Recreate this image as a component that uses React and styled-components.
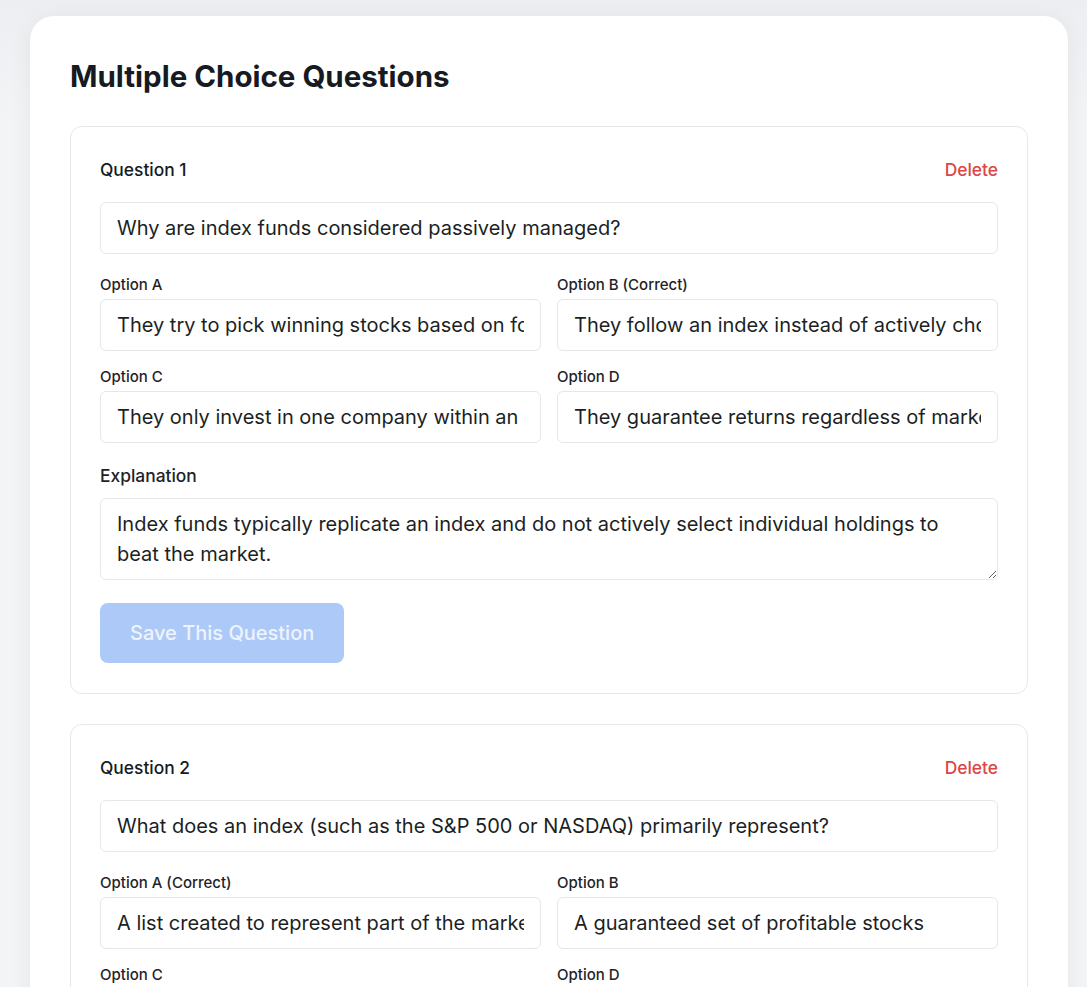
import React from 'react';
import styled, { createGlobalStyle } from 'styled-components';

const GlobalStyle = createGlobalStyle`
  html {
    scrollbar-width: none;
  }
  html::-webkit-scrollbar,
  body::-webkit-scrollbar {
    display: none;
  }
  body {
    margin: 0;
    background: #f3f4f6;
    font-family: Inter, "Noto Sans", "Liberation Sans", sans-serif;
    color: #111827;
  }
  * {
    box-sizing: border-box;
  }
`;

const questions = [
  {
    id: 1,
    text: 'Why are index funds considered passively managed?',
    options: [
      'They try to pick winning stocks based on forecasts',
      'They follow an index instead of actively choosing stocks',
      'They only invest in one company within an index',
      'They guarantee returns regardless of market conditions',
    ],
    correct: 1,
    explanation:
      'Index funds typically replicate an index and do not actively select individual holdings to beat the market.',
  },
  {
    id: 2,
    text: 'What does an index (such as the S&P 500 or NASDAQ) primarily represent?',
    options: [
      'A list created to represent part of the market',
      'A guaranteed set of profitable stocks',
      'A single company chosen by fund managers',
      'A government bond with a fixed return',
    ],
    correct: 0,
    explanation:
      'An index tracks a selected group of securities so that it reflects the performance of a segment of the market.',
  },
];

const letters = ['A', 'B', 'C', 'D'];

function QuestionCard({ q, index }) {
  return (
    <Card>
      <CardHeader>
        <QuestionTitle>{`Question ${index + 1}`}</QuestionTitle>
        <DeleteButton type="button">Delete</DeleteButton>
      </CardHeader>
      <TextInput defaultValue={q.text} readOnly />
      <OptionGrid>
        {q.options.map((opt, i) => (
          <Field key={i}>
            <OptionLabel>
              {`Option ${letters[i]}`}
              {q.correct === i ? ' (Correct)' : ''}
            </OptionLabel>
            <TextInput defaultValue={opt} readOnly />
          </Field>
        ))}
      </OptionGrid>
      <ExplanationLabel>Explanation</ExplanationLabel>
      <TextArea rows={2} defaultValue={q.explanation} readOnly />
      <SaveButton type="button" disabled>
        Save This Question
      </SaveButton>
    </Card>
  );
}

export default function App() {
  return (
    <>
      <GlobalStyle />
      <Page>
        <Panel>
          <Title>Multiple Choice Questions</Title>
          <CardList>
            {questions.map((q, i) => (
              <QuestionCard key={q.id} q={q} index={i} />
            ))}
          </CardList>
        </Panel>
      </Page>
    </>
  );
}

const Page = styled.div`
  min-height: 100vh;
  padding: 16px 19px 40px 30px;
  background: linear-gradient(180deg, #eceef1 0%, #f3f4f6 120px);
`;

const Panel = styled.main`
  background: #ffffff;
  border-radius: 24px;
  padding: 40px;
  box-shadow: 0 4px 24px rgba(17, 24, 39, 0.06);
`;

const Title = styled.h1`
  margin: 0 0 30px;
  font-size: 29.5px;
  line-height: 40px;
  font-weight: 700;
  color: #161a22;
`;

const CardList = styled.div`
  display: flex;
  flex-direction: column;
  gap: 30px;
`;

const Card = styled.section`
  border: 1px solid #e5e7eb;
  border-radius: 12px;
  padding: 29px 29px 30px;
`;

const CardHeader = styled.div`
  display: flex;
  justify-content: space-between;
  align-items: center;
  height: 26px;
  margin-bottom: 20px;
`;

const QuestionTitle = styled.h3`
  margin: 0;
  font-size: 17.4px;
  font-weight: 500;
  color: #161a22;
`;

const DeleteButton = styled.button`
  border: none;
  background: none;
  padding: 0;
  font-family: inherit;
  font-size: 17.4px;
  font-weight: 500;
  color: #de4545;
  cursor: pointer;
`;

const TextInput = styled.input`
  display: block;
  width: 100%;
  height: 52px;
  padding: 10px 16px;
  border: 1px solid #e5e7eb;
  border-radius: 6px;
  font-family: inherit;
  font-size: 20px;
  line-height: 30px;
  color: #1c1f24;
  background: #ffffff;
  outline: none;
`;

const OptionGrid = styled.div`
  display: grid;
  grid-template-columns: 1fr 1fr;
  column-gap: 16px;
  row-gap: 17px;
  margin-top: 22px;
`;

const Field = styled.div`
  display: flex;
  flex-direction: column;
`;

const OptionLabel = styled.label`
  font-size: 15px;
  line-height: 18px;
  font-weight: 500;
  color: #1f2329;
  margin-bottom: 5px;
`;

const ExplanationLabel = styled.label`
  display: block;
  margin: 21px 0 10px;
  font-size: 17.4px;
  line-height: 24px;
  font-weight: 500;
  color: #1f2329;
`;

const TextArea = styled.textarea`
  display: block;
  width: 100%;
  height: 82px;
  padding: 10px 16px;
  border: 1px solid #e5e7eb;
  border-radius: 6px;
  font-family: inherit;
  font-size: 20px;
  line-height: 30px;
  color: #1c1f24;
  resize: vertical;
  outline: none;
`;

const SaveButton = styled.button`
  display: block;
  margin-top: 23px;
  height: 60px;
  padding: 0 30px;
  border: none;
  border-radius: 8px;
  background: #adc9f8;
  color: #eef4fe;
  font-family: inherit;
  font-size: 20px;
  font-weight: 500;
  cursor: not-allowed;
`;
